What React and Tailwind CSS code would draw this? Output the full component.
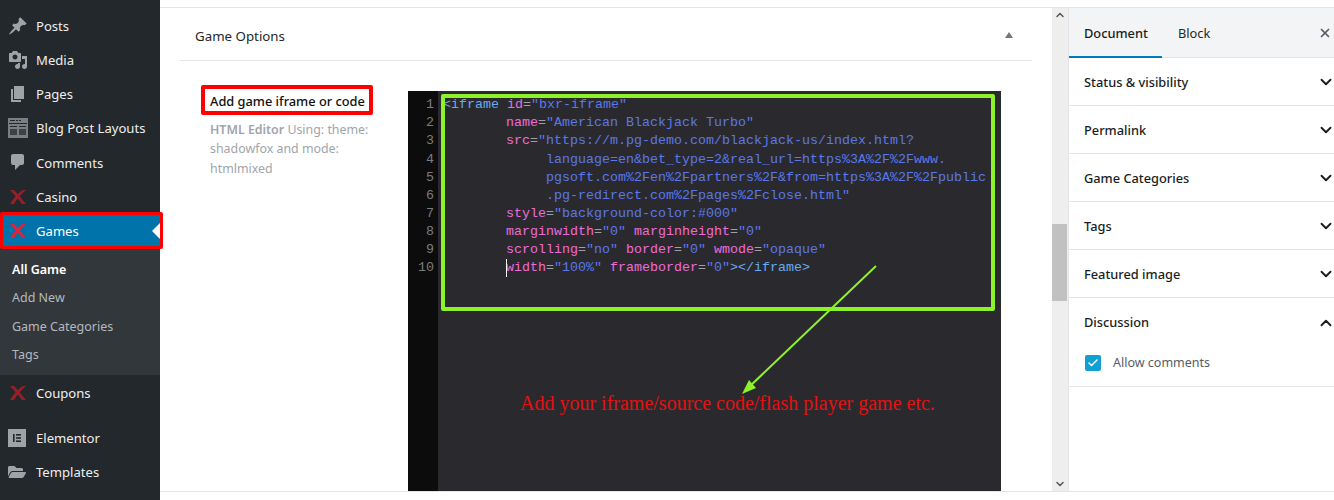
import React from "react";
import { FaFolderOpen } from "react-icons/fa";
import { ChevronDown, ChevronUp, X, Check } from "lucide-react";

const Dash = ({ d, className = "" }) => (
  <svg viewBox="0 0 20 20" className={`w-5 h-5 fill-[#9ea3a8] ${className}`}>
    <path d={d} />
  </svg>
);

const CrossIcon = ({ color }) => (
  <svg viewBox="0 0 20 20" className="w-5 h-5" fill={color}>
    <path d="M2 3L6 3C9 6 14 12 18 17L14 17C11 13 7 8 2 3z" />
    <path d="M18 3L15 3C10 6 5 12 2 17L6 17C9 12 13 7 18 3z" />
  </svg>
);

const BlogIcon = () => (
  <svg viewBox="0 0 20 20" className="w-5 h-5">
    <rect x="0" y="0" width="20" height="20" fill="#7b7f83" />
    <rect x="2" y="2" width="5" height="1" fill="#23282d" />
    <rect x="8" y="2" width="2" height="1" fill="#23282d" />
    <rect x="11" y="2" width="2" height="1" fill="#23282d" />
    <rect x="1" y="5" width="18" height="1" fill="#23282d" />
    <rect x="2" y="8" width="7" height="1" fill="#23282d" />
    <rect x="11" y="8" width="7" height="1" fill="#23282d" />
    <rect x="2" y="11" width="7" height="6" fill="#3c4145" />
    <rect x="11" y="11" width="7" height="6" fill="#3c4145" />
  </svg>
);

const ElementorIcon = () => (
  <svg viewBox="0 0 18 18" className="w-[18px] h-[18px]">
    <rect width="18" height="18" fill="#9ea3a8" />
    <rect x="5" y="5" width="1.6" height="8" fill="#23282d" />
    <rect x="8" y="5" width="5" height="1.6" fill="#23282d" />
    <rect x="8" y="8.2" width="5" height="1.6" fill="#23282d" />
    <rect x="8" y="11.4" width="5" height="1.6" fill="#23282d" />
  </svg>
);

const pin = "M10.44 3.02l1.82-1.82 6.36 6.35-1.83 1.82c-1.05-.68-2.48-.57-3.41.36l-.75.75c-.92.93-1.04 2.35-.35 3.41l-1.83 1.82-2.41-2.41-2.8 2.79c-.42.42-3.38 2.71-3.8 2.29s1.86-3.39 2.28-3.81l2.79-2.79L4.1 9.36l1.83-1.82c1.05.69 2.48.57 3.4-.36l.75-.75c.93-.92 1.05-2.35.36-3.41z";
const media = "M13 11V4c0-.55-.45-1-1-1h-1.67L9 1H5L3.67 3H2c-.55 0-1 .45-1 1v7c0 .55.45 1 1 1h10c.55 0 1-.45 1-1zM7 4.5c1.38 0 2.5 1.12 2.5 2.5S8.38 9.5 7 9.5 4.5 8.38 4.5 7 5.62 4.5 7 4.5zM14 6h5v10.5c0 1.38-1.12 2.5-2.5 2.5S14 17.88 14 16.5s1.12-2.5 2.5-2.5c.17 0 .34.02.5.05V9h-3V6zm-4 8.05V13h2v3.5c0 1.38-1.12 2.5-2.5 2.5S7 17.88 7 16.5 8.12 14 9.5 14c.17 0 .34.02.5.05z";
const page = "M6 15V2h10v13H6zm-1 1h8v2H3V5h2v11z";
const comment = "M5 2h9c1.1 0 2 .9 2 2v7c0 1.1-.9 2-2 2h-2l-5 5v-5H5c-1.1 0-2-.9-2-2V4c0-1.1.9-2 2-2z";

const MenuItem = ({ icon, label }) => (
  <div className="flex items-center h-[34.2px] pl-[8px]">
    <div className="w-[28px] shrink-0">{icon}</div>
    <span className="pt-[2px]">{label}</span>
  </div>
);

const Sidebar = () => (
  <aside className="relative w-[160px] shrink-0 h-full bg-[#23282d] text-[#eeeeee] text-[13.1px] pt-[8.5px]">
    <MenuItem icon={<Dash d={pin} />} label="Posts" />
    <MenuItem icon={<Dash d={media} />} label="Media" />
    <MenuItem icon={<Dash d={page} />} label="Pages" />
    <MenuItem icon={<BlogIcon />} label="Blog Post Layouts" />
    <MenuItem icon={<Dash d={comment} />} label="Comments" />
    <MenuItem icon={<CrossIcon color="#962029" />} label="Casino" />
    <div className="relative bg-[#0073aa] text-white">
      <MenuItem icon={<CrossIcon color="#e0233a" />} label="Games" />
      <div className="absolute right-0 top-[9px] border-y-[8px] border-r-[8px] border-y-transparent border-r-white" />
    </div>
    <div className="absolute left-0 top-[212px] w-[163px] h-[37px] border-[3px] border-[#ff0000] rounded-[2px]" />
    <div className="bg-[#32373c] pt-[8.2px] h-[127px] text-[12.5px] text-[#b4b9be] pl-[12px]">
      <div className="h-[28.4px] flex items-center text-white font-semibold">All Game</div>
      <div className="h-[28.4px] flex items-center">Add New</div>
      <div className="h-[28.4px] flex items-center">Game Categories</div>
      <div className="h-[28.4px] flex items-center">Tags</div>
    </div>
    <div className="pt-[0.6px]">
      <MenuItem icon={<CrossIcon color="#962029" />} label="Coupons" />
    </div>
    <div className="h-[10.9px]" />
    <MenuItem icon={<ElementorIcon />} label="Elementor" />
    <MenuItem icon={<FaFolderOpen className="w-[18px] h-[18px] text-[#9ea3a8]" />} label="Templates" />
  </aside>
);

const A = ({ children }) => <span className="text-[#ee6cd8]">{children}</span>;
const S = ({ children }) => <span className="text-[#5b78e8]">{children}</span>;
const T = ({ children }) => <span className="text-[#68aaf0]">{children}</span>;

const codeLines = [
  { indent: 0, code: <><T>&lt;iframe</T> <A>id</A>=<S>"bxr-iframe"</S></> },
  { indent: 63, code: <><A>name</A>=<S>"American Blackjack Turbo"</S></> },
  { indent: 63, code: <><A>src</A>=<S>"https://m.pg-demo.com/blackjack-us/index.html?</S></> },
  { indent: 103, code: <S>language=en&amp;bet_type=2&amp;real_url=https%3A%2F%2Fwww.</S> },
  { indent: 103, code: <S>pgsoft.com%2Fen%2Fpartners%2F&amp;from=https%3A%2F%2Fpublic</S> },
  { indent: 103, code: <S>.pg-redirect.com%2Fpages%2Fclose.html"</S> },
  { indent: 63, code: <><A>style</A>=<S>"background-color:#000"</S></> },
  { indent: 63, code: <><A>marginwidth</A>=<S>"0"</S> <A>marginheight</A>=<S>"0"</S></> },
  { indent: 63, code: <><A>scrolling</A>=<S>"no"</S> <A>border</A>=<S>"0"</S> <A>wmode</A>=<S>"opaque"</S></> },
  { indent: 63, code: <><A>width</A>=<S>"100%"</S> <A>frameborder</A>=<S>"0"</S><T>&gt;&lt;/iframe&gt;</T></> },
];

const Editor = () => (
  <div className="relative w-[593px] h-[400px] shrink-0 flex bg-[#2a2a2e] overflow-hidden font-['Liberation_Mono',monospace] text-[13.33px] leading-[18.1px] text-[#a0a0a2]">
    <div className="w-[30px] h-full bg-[#0c0c0d] pt-[5.3px] pr-[4px] text-right text-[#7c7c7c]">
      {codeLines.map((_, i) => (
        <div key={i}>{i + 1}</div>
      ))}
    </div>
    <div className="pt-[5.3px] pl-[5px] whitespace-pre">
      {codeLines.map((line, i) => (
        <div key={i} style={{ paddingLeft: line.indent }}>
          {line.code}
        </div>
      ))}
    </div>
    <div className="absolute left-[98px] top-[168px] w-px h-[18px] bg-white" />
    <div className="absolute left-[33px] top-[3px] w-[554px] h-[217px] border-[4px] border-[#8df22c] rounded-[2px]" />
    <svg className="absolute left-[320px] top-[165px]" width="160" height="145" viewBox="0 0 160 145">
      <path d="M148 10L20 132" stroke="#8df22c" strokeWidth="2" fill="none" />
      <path d="M14 138L21 124L28 132z" fill="#8df22c" />
    </svg>
    <div className="absolute left-[112px] top-[300px] font-['Liberation_Serif',serif] text-[20px] leading-[24px] text-[#e21212] whitespace-nowrap">
      Add your iframe/source code/flash player game etc.
    </div>
  </div>
);

const Content = () => (
  <main className="w-[892px] shrink-0 h-full overflow-hidden bg-white">
    <div className="mx-[20px] h-[53px] border-b border-[#e2e4e7] pl-[15px] pr-[16px] pt-[5px] flex items-center justify-between text-[13.3px] text-[#23282d]">
      <span>Game Options</span>
      <div className="w-0 h-0 border-x-[4px] border-b-[6px] border-x-transparent border-b-[#72777c] mb-[4px] mr-[3px]" />
    </div>
    <div className="flex pl-[41px] pt-[30px]">
      <div className="w-[207px] shrink-0 -mt-[6px]">
        <div className="w-[172px] h-[30px] border-[4px] border-[#ff0000] rounded-[2px] flex items-center pl-[5px] pt-[3px] text-[12.8px] font-medium text-[#111] whitespace-nowrap">
          Add game iframe or code
        </div>
        <div className="mt-[4.5px] pl-[9px] w-[170px] text-[12.4px] leading-[19.6px] text-[#a0a5aa]">
          <span className="font-semibold">HTML Editor</span> Using: theme: shadowfox and mode: htmlmixed
        </div>
      </div>
      <Editor />
    </div>
  </main>
);

const Scrollbar = () => (
  <div className="relative w-[17px] shrink-0 h-full bg-[#eeeeee] border-r border-[#e2e4e7] flex flex-col items-center justify-between py-[1px] text-[#555]">
    <ChevronUp className="w-[12px] h-[12px]" strokeWidth={3} />
    <div className="absolute left-0 top-[216px] w-[15px] h-[77px] bg-[#c1c1c1]" />
    <ChevronDown className="w-[12px] h-[12px]" strokeWidth={3} />
  </div>
);

const PanelRow = ({ label }) => (
  <div className="h-[48px] border-b border-[#e2e4e7] pl-[15px] flex items-center justify-between text-[12.8px] font-medium text-[#191e23]">
    <span className="pt-[2px]">{label}</span>
    <ChevronDown className="w-[18px] h-[18px] mr-[-1px] text-[#191e23]" strokeWidth={2.5} />
  </div>
);

const SettingsPanel = () => (
  <div className="flex-1 h-full bg-white">
    <div className="h-[50px] bg-[#f3f4f5] border-b border-[#e2e4e7] flex items-stretch text-[12.8px] text-[#191e23]">
      <div className="w-[93px] pl-[15px] pt-[3px] flex items-center border-b-[2px] border-[#007cba] h-[50px] font-medium">Document</div>
      <div className="pl-[16px] pt-[3px] flex items-center text-[#23282d]">Block</div>
      <X className="w-[14px] h-[14px] ml-auto mr-[2px] self-center text-[#555d66]" strokeWidth={3} />
    </div>
    <PanelRow label="Status & visibility" />
    <PanelRow label="Permalink" />
    <PanelRow label="Game Categories" />
    <PanelRow label="Tags" />
    <PanelRow label="Featured image" />
    <div className="h-[89px] border-b border-[#e2e4e7] pl-[15px] pt-[16px] text-[12.8px]">
      <div className="flex items-center justify-between h-[18px] font-medium text-[#191e23]">
        <span>Discussion</span>
        <ChevronUp className="w-[18px] h-[18px] mr-[-1px]" strokeWidth={2.5} />
      </div>
      <div className="flex items-center mt-[21px] text-[12.5px] text-[#555d66]">
        <div className="w-[16px] h-[16px] ml-[1px] rounded-[2px] bg-[#11a0d2] flex items-center justify-center mr-[12px]">
          <Check className="w-[12px] h-[12px] text-white" strokeWidth={3} />
        </div>
        <span className="pt-[1px]">Allow comments</span>
      </div>
    </div>
  </div>
);

const App = () => {
  return (
    <div className="flex w-[1334px] h-[500px] overflow-hidden bg-white font-['Noto_Sans',sans-serif]">
      <Sidebar />
      <div className="flex-1 flex flex-col h-full pt-[7px] pb-[8px]">
        <div className="flex flex-1 min-h-0 border-y border-[#e2e4e7]">
          <Content />
          <Scrollbar />
          <SettingsPanel />
        </div>
      </div>
    </div>
  );
};

export default App;
